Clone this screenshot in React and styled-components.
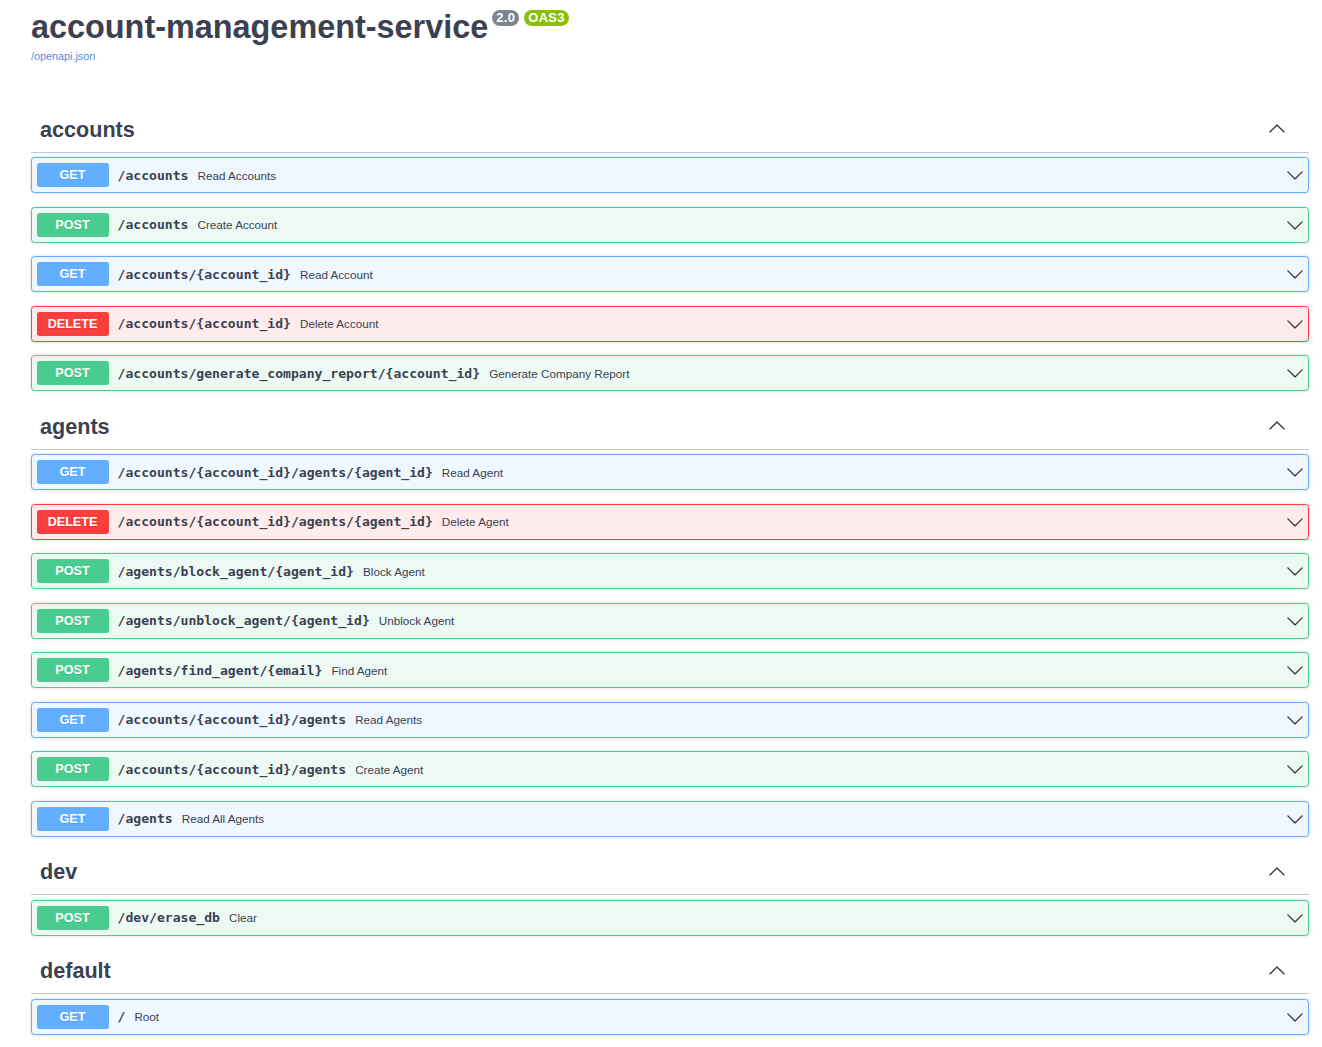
import React from 'react'
import styled, { createGlobalStyle } from 'styled-components'

const GlobalStyle = createGlobalStyle`
  body {
    margin: 0;
    background: #fff;
    color: #3b4151;
    font-family: 'Liberation Sans', Arial, sans-serif;
  }
`

const METHODS = {
  GET: { color: '#61affe', tint: '#eff7ff' },
  POST: { color: '#49cc90', tint: '#edfaf4' },
  DELETE: { color: '#f93e3e', tint: '#feecec' }
}

const sections = [
  {
    name: 'accounts',
    ops: [
      ['GET', '/accounts', 'Read Accounts'],
      ['POST', '/accounts', 'Create Account'],
      ['GET', '/accounts/{account_id}', 'Read Account'],
      ['DELETE', '/accounts/{account_id}', 'Delete Account'],
      ['POST', '/accounts/generate_company_report/{account_id}', 'Generate Company Report']
    ]
  },
  {
    name: 'agents',
    ops: [
      ['GET', '/accounts/{account_id}/agents/{agent_id}', 'Read Agent'],
      ['DELETE', '/accounts/{account_id}/agents/{agent_id}', 'Delete Agent'],
      ['POST', '/agents/block_agent/{agent_id}', 'Block Agent'],
      ['POST', '/agents/unblock_agent/{agent_id}', 'Unblock Agent'],
      ['POST', '/agents/find_agent/{email}', 'Find Agent'],
      ['GET', '/accounts/{account_id}/agents', 'Read Agents'],
      ['POST', '/accounts/{account_id}/agents', 'Create Agent'],
      ['GET', '/agents', 'Read All Agents']
    ]
  },
  {
    name: 'dev',
    ops: [['POST', '/dev/erase_db', 'Clear']]
  },
  {
    name: 'default',
    ops: [['GET', '/', 'Root']]
  }
]

const ArrowDown = () => (
  <Arrow viewBox="0 0 20 20">
    <path d="M17.418 6.109c.272-.268.709-.268.979 0s.271.701 0 .969l-7.908 7.83c-.27.268-.707.268-.979 0l-7.908-7.83c-.27-.268-.27-.701 0-.969.271-.268.709-.268.979 0L10 13.25l7.418-7.141z" />
  </Arrow>
)

const ArrowUp = () => (
  <Arrow viewBox="0 0 20 20" $up>
    <path d="M17.418 14.908c.272.268.709.268.979 0s.271-.701 0-.969l-7.908-7.83c-.27-.268-.707-.268-.979 0l-7.908 7.83c-.27.268-.27.701 0 .969.271.268.709.268.979 0L10 7.767l7.418 7.141z" />
  </Arrow>
)

export default function App () {
  return (
    <Wrapper>
      <GlobalStyle />
      <Info>
        <Title>
          account-management-service
          <Versions>
            <Version $bg="#7d8492">2.0</Version>
            <Version $bg="#89bf04">OAS3</Version>
          </Versions>
        </Title>
        <SpecLink href="#">/openapi.json</SpecLink>
      </Info>
      {sections.map(section => (
        <TagSection key={section.name}>
          <TagHeader>
            <span>{section.name}</span>
            <ArrowUp />
          </TagHeader>
          {section.ops.map(([method, path, summary], i) => (
            <Operation key={i} $color={METHODS[method].color} $tint={METHODS[method].tint}>
              <Method $color={METHODS[method].color}>{method}</Method>
              <Path>{path}</Path>
              <Description>{summary}</Description>
              <ArrowDown />
            </Operation>
          ))}
        </TagSection>
      ))}
    </Wrapper>
  )
}

const Wrapper = styled.div`
  padding: 0 13px 0 31px;
`

const Info = styled.div`
  display: flex;
  flex-direction: column;
  align-items: flex-start;
  padding-top: 9px;
  margin-bottom: 45px;
`

const Title = styled.h2`
  display: flex;
  align-items: flex-start;
  margin: 0;
  font-size: 32.4px;
  line-height: 36px;
  font-weight: 700;
  color: #3b4151;
`

const Versions = styled.div`
  display: flex;
  gap: 5px;
  margin: 1px 0 0 4px;
`

const Version = styled.span`
  display: block;
  padding: 0 4px;
  border-radius: 57px;
  background: ${p => p.$bg};
  color: #fff;
  font-size: 13px;
  line-height: 16px;
  font-weight: 700;
  letter-spacing: 0.3px;
`

const SpecLink = styled.a`
  margin-top: 4.5px;
  font-size: 10.8px;
  line-height: 13px;
  color: #4990e2;
  text-decoration: none;
`

const TagSection = styled.section`
  display: flex;
  flex-direction: column;
`

const TagHeader = styled.h3`
  display: flex;
  align-items: center;
  margin: 0 0 4.5px;
  padding: 9px 23px 9px 9px;
  border-bottom: 1px solid rgba(59, 65, 81, 0.3);
  font-size: 21.6px;
  line-height: 26px;
  font-weight: 700;
  color: #3b4151;
`

const Operation = styled.div`
  display: flex;
  align-items: center;
  height: 25px;
  padding: 4.5px;
  margin-bottom: 13.5px;
  border: 1px solid ${p => p.$color};
  border-radius: 3.6px;
  background: ${p => p.$tint};
  box-shadow: 0 0 3px rgba(0, 0, 0, 0.19);
`

const Method = styled.span`
  flex: none;
  min-width: 72px;
  height: 24px;
  line-height: 24px;
  text-align: center;
  border-radius: 2.7px;
  background: ${p => p.$color};
  color: #fff;
  font-size: 12.6px;
  font-weight: 700;
  text-shadow: 0 1px 0 rgba(0, 0, 0, 0.1);
`

const Path = styled.span`
  padding: 0 9px;
  font-family: 'DejaVu Sans Mono', 'Liberation Mono', monospace;
  font-size: 13.1px;
  font-weight: 600;
  color: #3b4151;
`

const Description = styled.span`
  font-size: 11.7px;
  color: #3b4151;
`

const Arrow = styled.svg`
  flex: none;
  width: 18px;
  height: 18px;
  margin-left: auto;
  margin-top: ${p => (p.$up ? '-3px' : '0')};
  fill: #333;
`
